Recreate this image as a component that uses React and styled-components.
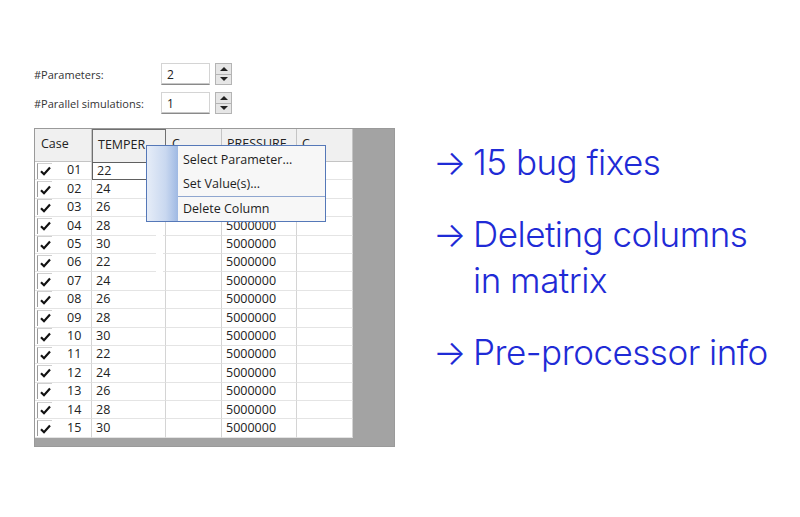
import React from "react";
import styled, { createGlobalStyle } from "styled-components";

const GlobalStyle = createGlobalStyle`
  html, body {
    margin: 0;
    padding: 0;
    background: #ffffff;
  }
  body {
    width: 800px;
    height: 517px;
    overflow: hidden;
  }
`;

const Page = styled.div`
  display: flex;
  align-items: flex-start;
  gap: 38px;
  padding: 63px 0 0 34px;
  height: 517px;
  box-sizing: border-box;
`;

const LeftPanel = styled.div`
  display: flex;
  flex-direction: column;
  width: 361px;
  position: relative;
  font-family: "Open Sans", "Noto Sans", sans-serif;
  color: #222;
`;

const ParamRow = styled.div`
  display: flex;
  align-items: center;
  height: 22px;
  margin-bottom: 7px;
`;

const ParamLabel = styled.span`
  width: 127px;
  font-size: 11px;
  color: #333;
`;

const NumberBox = styled.div`
  width: 42px;
  height: 20px;
  border: 1px solid #d4d4d4;
  border-bottom-color: #8a8a8a;
  display: flex;
  align-items: center;
  padding-left: 5px;
  box-sizing: content-box;
  font-size: 12px;
  margin-right: 5px;
  box-shadow: inset 0 -1px 0 #c8c8c8;
`;

const Spinner = styled.div`
  width: 15px;
  height: 20px;
  border: 1px solid #b4b4b4;
  display: flex;
  flex-direction: column;
  background: #e6e6e6;
`;

const SpinHalf = styled.div`
  flex: 1;
  display: flex;
  align-items: center;
  justify-content: center;
  & + & {
    border-top: 1px solid #b4b4b4;
  }
`;

const Tri = styled.div`
  width: 0;
  height: 0;
  border-left: 4px solid transparent;
  border-right: 4px solid transparent;
  ${(p) =>
    p.$down
      ? "border-top: 4px solid #222;"
      : "border-bottom: 4px solid #222;"}
`;

const GridFrame = styled.div`
  margin-top: 7px;
  height: 319px;
  background: #a3a3a3;
  border: 1px solid #9a9a9a;
  box-sizing: border-box;
  position: relative;
  overflow: hidden;
`;

const Table = styled.div`
  width: 318px;
  background: #ffffff;
`;

const HeaderRow = styled.div`
  display: flex;
  height: 33px;
  background: #f0f0f0;
`;

const HeaderCell = styled.div`
  width: ${(p) => p.$w}px;
  box-sizing: border-box;
  border-right: 1px solid #c4c4c4;
  border-bottom: 1px solid #c4c4c4;
  ${(p) => p.$active && "border: 1px solid #707070; border-bottom: none;"}
  font-size: 12.5px;
  padding: 0 0 3px ${(p) => p.$pad || 6}px;
  display: flex;
  align-items: center;
  white-space: nowrap;
  overflow: hidden;
`;

const Row = styled.div`
  display: flex;
  height: 18.4px;
`;

const Cell = styled.div`
  width: ${(p) => p.$w}px;
  box-sizing: border-box;
  border-right: 1px solid #d4d4d4;
  border-bottom: 1px solid #e4e4e4;
  ${(p) => p.$focus && "border: 1px solid #606060;"}
  font-size: 12.5px;
  padding-left: 4px;
  display: flex;
  align-items: center;
  line-height: 1;
`;

const CaseCell = styled(Cell)`
  padding-left: 2px;
  gap: 15px;
`;

const CheckBox = styled.div`
  width: 14px;
  height: 15px;
  border-left: 1px solid #9a9a9a;
  border-top: 1px solid #d0d0d0;
  display: flex;
  align-items: center;
  justify-content: center;
`;

const Menu = styled.div`
  position: absolute;
  left: 111px;
  top: 16px;
  width: 180px;
  height: 77px;
  box-sizing: border-box;
  border: 1px solid #5578b8;
  background: #f7f7f7;
  display: flex;
`;

const MenuStrip = styled.div`
  width: 31px;
  background: linear-gradient(to right, #e6edf8 0%, #c9d8f0 60%, #9fb9e3 100%);
`;

const MenuItems = styled.div`
  flex: 1;
  display: flex;
  flex-direction: column;
  padding: 1px 0 0 5px;
`;

const MenuItem = styled.div`
  height: 25px;
  display: flex;
  align-items: center;
  font-size: 12.5px;
  color: #1e1e1e;
`;

const MenuSep = styled.div`
  height: 1px;
  background: #8fa6cf;
  margin: 0 0 0 -5px;
`;

const ShadowGap = styled.div`
  position: absolute;
  left: 121px;
  top: 93px;
  width: 7px;
  height: 68px;
  background: #ffffff;
`;

const RightPanel = styled.div`
  display: flex;
  flex-direction: column;
  gap: 26px;
  padding-top: 76px;
  font-family: Inter, "Noto Sans", sans-serif;
  font-weight: 300;
  font-size: 35px;
  color: #1f2bd6;
  letter-spacing: -0.5px;
`;

const Point = styled.div`
  display: flex;
  gap: 10px;
  line-height: 46px;
`;

const Arrow = styled.span`
  width: 30px;
  flex: none;
`;

const cols = [57, 74, 56, 75, 56];
const temps = [22, 24, 26, 28, 30];

const Check = () => (
  <svg width="11" height="10" viewBox="0 0 11 10">
    <path d="M1 5.2 L4 8.2 L10 1.5" fill="none" stroke="#111" strokeWidth="2.2" />
  </svg>
);

const Param = ({ label, value }) => (
  <ParamRow>
    <ParamLabel>{label}</ParamLabel>
    <NumberBox>{value}</NumberBox>
    <Spinner>
      <SpinHalf>
        <Tri />
      </SpinHalf>
      <SpinHalf>
        <Tri $down />
      </SpinHalf>
    </Spinner>
  </ParamRow>
);

export default function App() {
  const rows = Array.from({ length: 15 }, (_, i) => i + 1);
  return (
    <>
      <GlobalStyle />
      <Page>
        <LeftPanel>
          <Param label="#Parameters:" value="2" />
          <Param label="#Parallel simulations:" value="1" />
          <GridFrame>
            <Table>
              <HeaderRow>
                <HeaderCell $w={cols[0]}>Case</HeaderCell>
                <HeaderCell $w={cols[1]} $active $pad={5}>TEMPER</HeaderCell>
                <HeaderCell $w={cols[2]}>C</HeaderCell>
                <HeaderCell $w={cols[3]} $pad={5}>PRESSURE</HeaderCell>
                <HeaderCell $w={cols[4]} $pad={5}>C</HeaderCell>
              </HeaderRow>
              {rows.map((n) => (
                <Row key={n}>
                  <CaseCell $w={cols[0]}>
                    <CheckBox>
                      <Check />
                    </CheckBox>
                    {String(n).padStart(2, "0")}
                  </CaseCell>
                  <Cell $w={cols[1]} $focus={n === 1}>
                    {temps[(n - 1) % 5]}
                  </Cell>
                  <Cell $w={cols[2]} />
                  <Cell $w={cols[3]}>5000000</Cell>
                  <Cell $w={cols[4]} />
                </Row>
              ))}
            </Table>
            <Menu>
              <MenuStrip />
              <MenuItems>
                <MenuItem>Select Parameter...</MenuItem>
                <MenuItem>Set Value(s)...</MenuItem>
                <MenuSep />
                <MenuItem>Delete Column</MenuItem>
              </MenuItems>
            </Menu>
            <ShadowGap />
          </GridFrame>
        </LeftPanel>
        <RightPanel>
          <Point>
            <Arrow>→</Arrow>
            <span>15 bug fixes</span>
          </Point>
          <Point>
            <Arrow>→</Arrow>
            <span>
              Deleting columns
              <br />
              in matrix
            </span>
          </Point>
          <Point>
            <Arrow>→</Arrow>
            <span>Pre-processor info</span>
          </Point>
        </RightPanel>
      </Page>
    </>
  );
}
